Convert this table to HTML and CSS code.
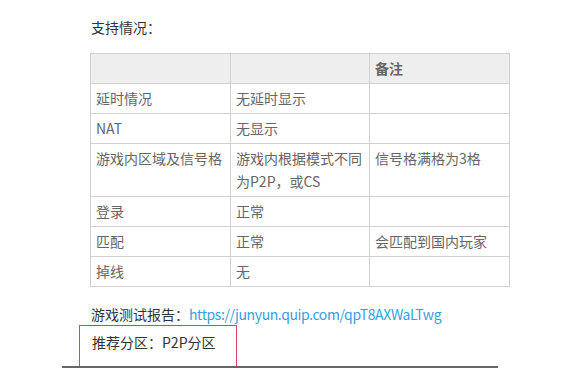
FILE: index.html
```html
<!DOCTYPE html>
<html lang="zh">
<head>
<meta charset="utf-8">
<link rel="stylesheet" href="styles.css">
</head>
<body>
<div class="doc">
  <p class="title">支持情况：</p>
  <table class="tbl">
    <colgroup><col class="c1"><col class="c2"><col class="c3"></colgroup>
    <thead>
      <tr><th></th><th></th><th>备注</th></tr>
    </thead>
    <tbody>
      <tr><td>延时情况</td><td>无延时显示</td><td></td></tr>
      <tr><td>NAT</td><td>无显示</td><td></td></tr>
      <tr><td>游戏内区域及信号格</td><td>游戏内根据模式不同为P2P，或CS</td><td>信号格满格为3格</td></tr>
      <tr><td>登录</td><td>正常</td><td></td></tr>
      <tr><td>匹配</td><td>正常</td><td>会匹配到国内玩家</td></tr>
      <tr><td>掉线</td><td>无</td><td></td></tr>
    </tbody>
  </table>
  <p class="report">游戏测试报告：<a class="link" href="#">https://junyun.quip.com/qpT8AXWaLTwg</a></p>
  <div class="rec"><span>推荐分区：P2P分区</span></div>
</div>
<div class="rule"></div>
</body>
</html>
```

FILE: styles.css
```css
html, body {
  margin: 0;
  padding: 0;
  background: #fff;
  height: 368px;
  overflow: hidden;
}
body {
  font-family: "Noto Sans CJK SC", "Noto Sans", sans-serif;
  font-size: 14px;
  color: #333;
  position: relative;
}
.doc {
  padding-left: 90px;
  padding-top: 16px;
}
.title {
  margin: 0;
  line-height: 22px;
  padding-left: 1px;
}
.tbl {
  margin-top: 15px;
  border-collapse: collapse;
  table-layout: fixed;
  width: 419px;
  color: #666;
}
.c1 { width: 140px; }
.c2 { width: 139px; }
.c3 { width: 140px; }
.tbl th, .tbl td {
  border: 1px solid #d0d0d0;
  padding: 3px 5px;
  line-height: 23px;
  text-align: left;
  vertical-align: top;
  font-weight: normal;
}
.tbl th {
  background: #eeeeee;
  font-weight: bold;
  height: 23px;
}
.tbl td { height: 23px; }
.report {
  margin: 0;
  margin-top: 16px;
  line-height: 22px;
  padding-left: 1px;
}
.link {
  color: #3a9ee0;
  text-decoration: none;
  letter-spacing: -0.4px;
}
.rec {
  margin-left: -11px;
  margin-top: 0;
  width: 145px;
  height: 40px;
  border: 1px solid #d24562;
  padding-left: 11px;
}
.rec span {
  display: block;
  line-height: 22px;
  padding-top: 5px;
  padding-left: 1px;
}
.rule {
  position: absolute;
  left: 62px;
  top: 366px;
  width: 436px;
  height: 2px;
  background: #666;
}
```
